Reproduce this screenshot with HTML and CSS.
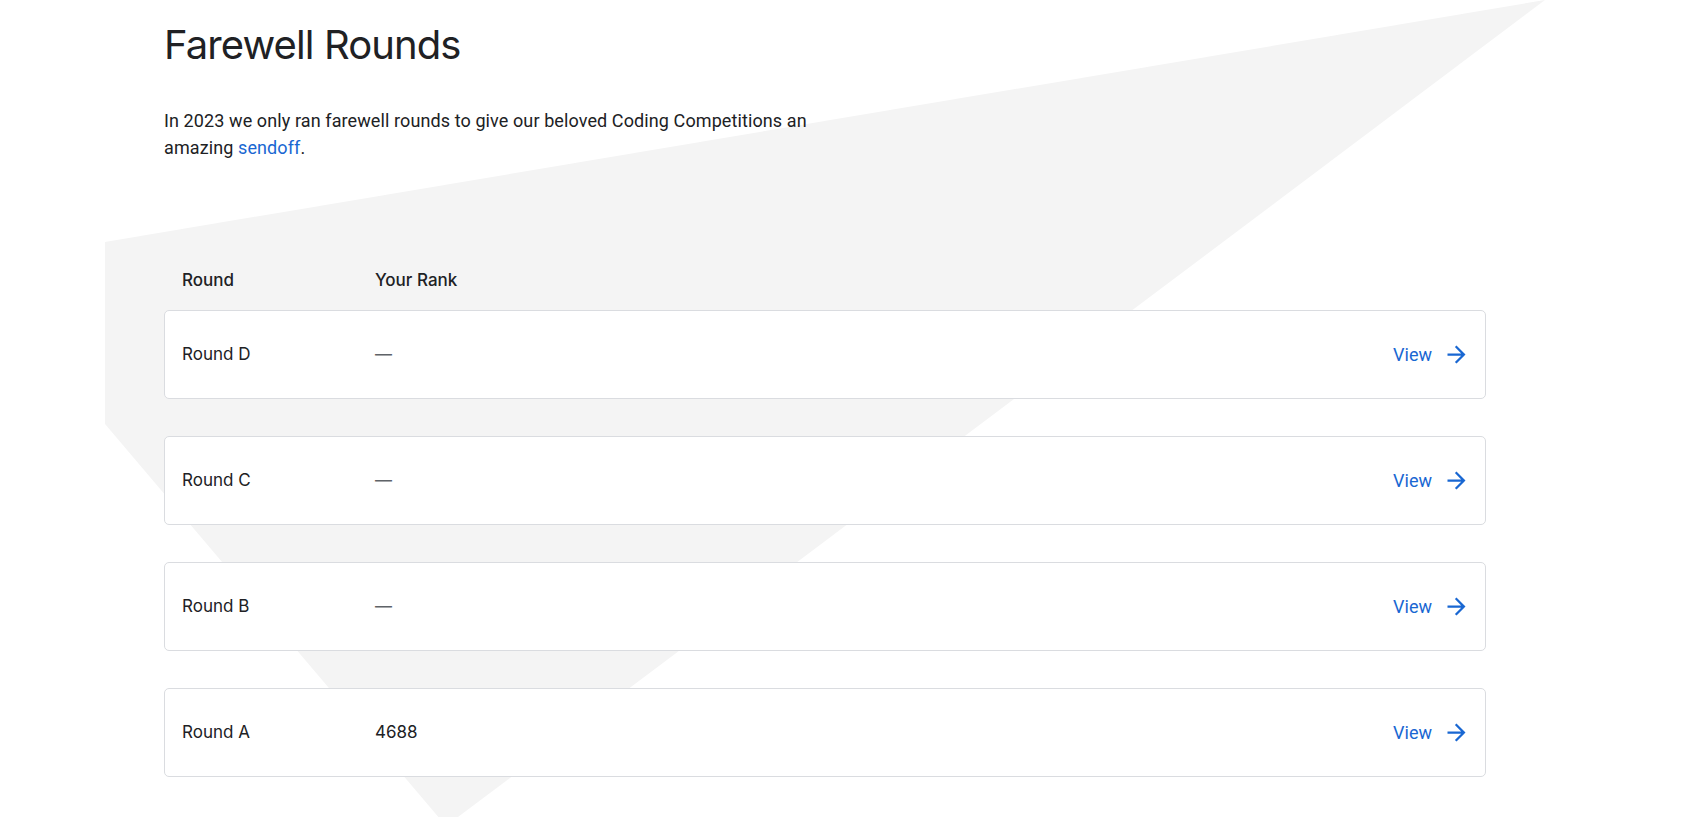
FILE: index.html
```html
<!DOCTYPE html>
<html lang="en">
<head>
<meta charset="utf-8">
<title>Farewell Rounds</title>
<link rel="stylesheet" href="styles.css">
</head>
<body>
<svg class="bg-shape" width="1702" height="817" viewBox="0 0 1702 817" aria-hidden="true">
  <polygon points="105,242 1545,0 446,826 105,424" fill="#f4f4f4"/>
</svg>
<main class="page">
  <h1 class="title">Farewell Rounds</h1>
  <p class="intro">In 2023 we only ran farewell rounds to give our beloved Coding Competitions an amazing <a class="link" href="#">sendoff</a>.</p>
  <section class="rounds">
    <div class="rounds-head">
      <span class="head-cell">Round</span>
      <span class="head-cell">Your Rank</span>
    </div>
    <div class="round-card">
      <span class="cell-name">Round D</span>
      <span class="cell-rank empty">—</span>
      <a class="view-link" href="#"><span>View</span><svg class="arrow" viewBox="0 0 24 24" width="27" height="27"><path d="M12 4l-1.41 1.41L16.17 11H4v2h12.17l-5.58 5.59L12 20l8-8z" fill="currentColor"/></svg></a>
    </div>
    <div class="round-card">
      <span class="cell-name">Round C</span>
      <span class="cell-rank empty">—</span>
      <a class="view-link" href="#"><span>View</span><svg class="arrow" viewBox="0 0 24 24" width="27" height="27"><path d="M12 4l-1.41 1.41L16.17 11H4v2h12.17l-5.58 5.59L12 20l8-8z" fill="currentColor"/></svg></a>
    </div>
    <div class="round-card">
      <span class="cell-name">Round B</span>
      <span class="cell-rank empty">—</span>
      <a class="view-link" href="#"><span>View</span><svg class="arrow" viewBox="0 0 24 24" width="27" height="27"><path d="M12 4l-1.41 1.41L16.17 11H4v2h12.17l-5.58 5.59L12 20l8-8z" fill="currentColor"/></svg></a>
    </div>
    <div class="round-card">
      <span class="cell-name">Round A</span>
      <span class="cell-rank">4688</span>
      <a class="view-link" href="#"><span>View</span><svg class="arrow" viewBox="0 0 24 24" width="27" height="27"><path d="M12 4l-1.41 1.41L16.17 11H4v2h12.17l-5.58 5.59L12 20l8-8z" fill="currentColor"/></svg></a>
    </div>
  </section>
</main>
</body>
</html>
```
FILE: styles.css
```css
html, body {
  margin: 0;
  padding: 0;
  background: #ffffff;
  height: 817px;
  overflow: hidden;
}

body {
  position: relative;
  color: #202124;
  font-family: Inter, "Noto Sans", sans-serif;
}

.bg-shape {
  position: absolute;
  top: 0;
  left: 0;
  z-index: 0;
}

.page {
  position: relative;
  z-index: 1;
  width: 1322px;
  margin-left: 164px;
  padding-top: 21px;
}

.title {
  margin: 0;
  font-family: Inter, "Noto Sans", sans-serif;
  font-weight: 400;
  font-size: 40px;
  line-height: 48px;
  letter-spacing: -0.9px;
  color: #202124;
}

.intro {
  margin: 38px 0 0;
  width: 660px;
  font-family: Roboto, "Liberation Sans", sans-serif;
  font-size: 18px;
  line-height: 27px;
  letter-spacing: 0.1px;
  color: #202124;
}

.link {
  color: #1967d2;
  text-decoration: none;
}

.rounds {
  margin-top: 106px;
}

.rounds-head {
  display: grid;
  grid-template-columns: 193px 1fr;
  padding-left: 18px;
  margin-bottom: 16px;
  font-size: 17px;
  line-height: 27px;
  font-weight: 500;
  color: #202124;
}

.round-card {
  display: grid;
  grid-template-columns: 193px 1fr auto;
  align-items: center;
  padding: 30px 15px 30px 17px;
  margin-bottom: 37px;
  background: #ffffff;
  border: 1px solid #dadce0;
  border-radius: 5px;
  font-size: 17px;
  line-height: 27px;
  color: #202124;
}

.cell-rank.empty {
  color: #5f6368;
}

.view-link {
  display: flex;
  align-items: center;
  gap: 11px;
  font-family: Roboto, "Liberation Sans", sans-serif;
  font-size: 18px;
  line-height: 27px;
  color: #1967d2;
  text-decoration: none;
}

.arrow {
  display: block;
}
```
